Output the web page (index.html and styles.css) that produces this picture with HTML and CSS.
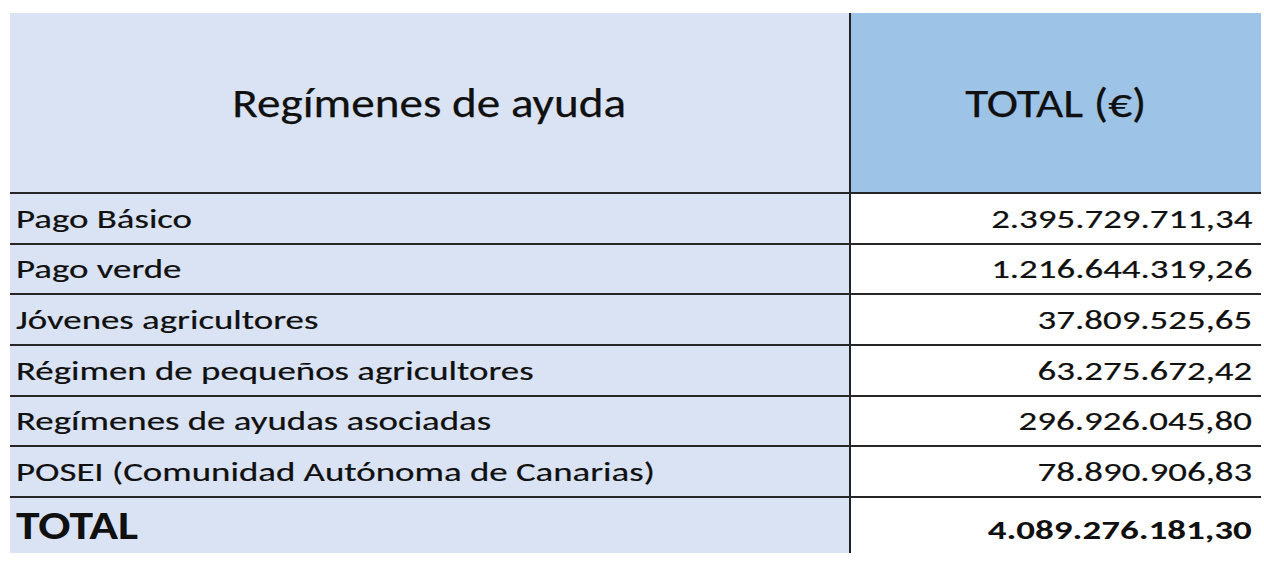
FILE: index.html
```html
<!DOCTYPE html>
<html lang="es">
<head>
<meta charset="utf-8">
<title>Regímenes de ayuda</title>
<link rel="stylesheet" href="styles.css">
</head>
<body>
<div class="sheet">
  <div class="row head">
    <div class="c1"><span class="t">Regímenes de ayuda</span></div>
    <div class="c2"><span class="t">TOTAL (€)</span></div>
  </div>
  <div class="row">
    <div class="c1"><span class="t">Pago Básico</span></div>
    <div class="c2"><span class="t">2.395.729.711,34</span></div>
  </div>
  <div class="row">
    <div class="c1"><span class="t">Pago verde</span></div>
    <div class="c2"><span class="t">1.216.644.319,26</span></div>
  </div>
  <div class="row">
    <div class="c1"><span class="t">Jóvenes agricultores</span></div>
    <div class="c2"><span class="t">37.809.525,65</span></div>
  </div>
  <div class="row">
    <div class="c1"><span class="t">Régimen de pequeños agricultores</span></div>
    <div class="c2"><span class="t">63.275.672,42</span></div>
  </div>
  <div class="row">
    <div class="c1"><span class="t">Regímenes de ayudas asociadas</span></div>
    <div class="c2"><span class="t">296.926.045,80</span></div>
  </div>
  <div class="row">
    <div class="c1"><span class="t">POSEI (Comunidad Autónoma de Canarias)</span></div>
    <div class="c2"><span class="t">78.890.906,83</span></div>
  </div>
  <div class="row total">
    <div class="c1"><span class="t">TOTAL</span></div>
    <div class="c2"><span class="t">4.089.276.181,30</span></div>
  </div>
</div>
</body>
</html>
```

FILE: styles.css
```css
html, body {
  margin: 0;
  padding: 0;
  background: #ffffff;
}
body {
  font-family: Carlito, Calibri, Lato, "Liberation Sans", sans-serif;
  color: #101010;
}
.sheet {
  margin: 13px 0 0 10px;
  width: 1251px;
}
.row {
  display: flex;
  box-sizing: border-box;
  height: 50.67px;
  border-top: 2px solid #262626;
  font-size: 27px;
}
.row.head {
  height: 179px;
  border-top: 0;
  font-size: 41px;
}
.row.total {
  height: 57px;
  font-weight: 700;
}
.c1 {
  width: 839px;
  background: #dae3f3;
  display: flex;
  align-items: center;
  padding-left: 6px;
  box-sizing: border-box;
}
.c2 {
  flex: 1;
  border-left: 2px solid #222222;
  background: #ffffff;
  display: flex;
  align-items: center;
  justify-content: flex-end;
  padding-right: 9px;
}
.t {
  display: inline-block;
  white-space: nowrap;
  transform: scaleX(1.365);
  -webkit-text-stroke: 0.2px #101010;
}
.c1 .t {
  transform-origin: left center;
}
.c2 .t {
  transform-origin: right center;
}
.head .c1 {
  justify-content: center;
  padding: 0;
}
.head .c2 {
  background: #9dc3e6;
  justify-content: center;
  padding: 0;
}
.head .t {
  transform: scaleX(1.15);
  transform-origin: center center;
  -webkit-text-stroke: 0.25px #101010;
}
.total .c1 {
  font-size: 41px;
}
.total .c1 .t {
  transform: scaleX(1.16);
  -webkit-text-stroke: 0;
}
.total .c2 {
  font-size: 27px;
  padding-top: 8px;
}
.total .c2 .t {
  transform: scaleX(1.37);
  -webkit-text-stroke: 0;
}
```
